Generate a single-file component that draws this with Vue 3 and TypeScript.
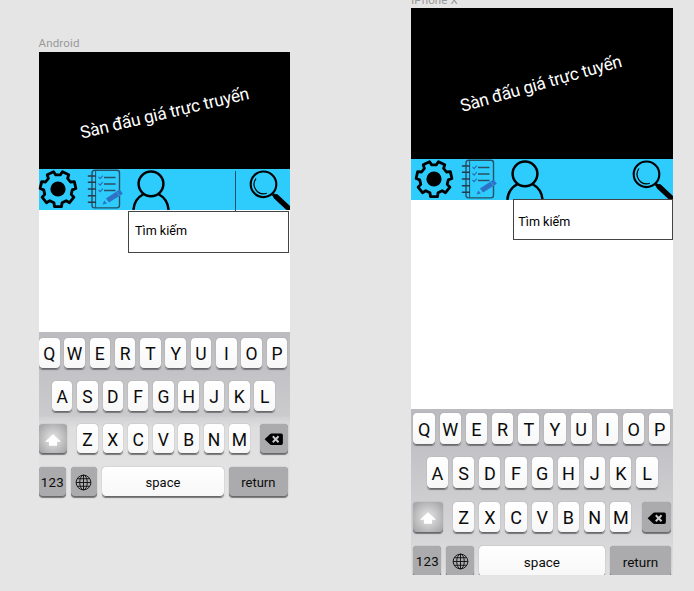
<script setup lang="ts">
interface Device {
  id: string
  label: string
  title: string
  width: number
  height: number
  x: number
  y: number
  angle: number
  length: number
}

const devices: Device[] = [
  { id: 'android', label: 'Android', title: 'Sàn đấu giá trực truyến', width: 251.5, height: 117, x: 127, y: 66.6, angle: -13.3, length: 173 },
  { id: 'iphone', label: 'iPhone X', title: 'Sàn đấu giá trực tuyến', width: 262, height: 151, x: 131.6, y: 81.3, angle: -15.9, length: 167 },
]

const topKeys = 'QWERTYUIOP'.split('')
const homeKeys = 'ASDFGHJKL'.split('')
const bottomKeys = 'ZXCVBNM'.split('')

function gearPath(teeth: number, outer: number, inner: number): string {
  const step = (Math.PI * 2) / teeth
  const profile: [number, number][] = [
    [-0.32, inner],
    [-0.22, outer],
    [0.22, outer],
    [0.32, inner],
  ]
  const points: string[] = []
  for (let i = 0; i < teeth; i++) {
    for (const [offset, radius] of profile) {
      const a = Math.PI / 2 + (i + offset) * step
      points.push(`${(20 + Math.cos(a) * radius).toFixed(2)} ${(20 + Math.sin(a) * radius).toFixed(2)}`)
    }
  }
  return `M${points.join('L')}Z`
}

const gear = gearPath(7, 17.9, 14.3)
</script>

<template>
  <main class="board">
    <section v-for="d in devices" :key="d.id" class="device" :class="d.id">
      <div class="label">{{ d.label }}</div>
      <div class="screen">
        <svg class="banner" :viewBox="`0 0 ${d.width} ${d.height}`" preserveAspectRatio="none">
          <text :x="d.x" :y="d.y" :transform="`rotate(${d.angle} ${d.x} ${d.y})`" :textLength="d.length" text-anchor="middle">{{ d.title }}</text>
        </svg>
        <div class="toolbar">
          <svg class="icon gear" viewBox="0 0 40 40">
            <path :d="gear" fill="none" stroke="#000" stroke-width="2.8" stroke-linejoin="round" />
            <circle cx="20" cy="20" r="7.6" />
          </svg>
          <svg class="icon notes" viewBox="0 0 38 41" fill="none">
            <rect x="6" y="1.3" width="27.5" height="37.6" rx="2.6" stroke="#285067" stroke-width="1.4" />
            <path d="M9.6 1.5V38.7" stroke="#285067" stroke-width="1" />
            <path d="M2.4 7h7M2.4 13.3h7M2.4 20h7M2.4 26.7h7M2.4 33.3h7" stroke="#243d4e" stroke-width="1.5" stroke-linecap="round" />
            <path d="M18 8.5h11.5M18 15h11.5M18 21.5h11.5" stroke="#285067" stroke-width="1.4" />
            <path d="M12.5 8l1.7 1.7 2.6-3M12.5 14.5l1.7 1.7 2.6-3M12.5 21l1.7 1.7 2.6-3" stroke="#2871b7" stroke-width="1.2" />
            <path d="M19.9 29.4L33.6 20.6 36.8 24.8 23 33.6Z" fill="#2d72c5" />
            <path d="M30.4 22.4L33.8 27.2" stroke="#31a7e6" stroke-width=".8" />
            <path d="M18.2 31.4L21 34.6 16.6 35.6Z" fill="#2d72c5" />
          </svg>
          <svg class="icon person" viewBox="0 0 38 41" fill="none" stroke="#000" stroke-width="2.5">
            <circle cx="19" cy="14.8" r="12.4" />
            <path d="M1.4 40.8C2 33 6 28 11.7 25M26.3 25C32 28 36 33 36.6 40.8" />
          </svg>
          <span class="divider"></span>
          <svg class="icon search" viewBox="0 0 41 41" fill="none" stroke="#000">
            <circle cx="14.5" cy="15.3" r="12.8" stroke-width="2.1" />
            <path d="M7 9.5A9.6 9.6 0 0 0 17.8 24.3" stroke-width="1.2" />
            <path d="M23.8 25.2L27 28.2" stroke-width="3" />
            <path d="M27.2 27.8L39.5 39.2" stroke-width="5.4" stroke-linecap="round" />
          </svg>
          <div class="field">Tìm kiếm</div>
        </div>
        <div class="content"></div>
        <div class="keyboard">
          <div class="row">
            <span v-for="k in topKeys" :key="k" class="key">{{ k }}</span>
          </div>
          <div class="row centered">
            <span v-for="k in homeKeys" :key="k" class="key">{{ k }}</span>
          </div>
          <div class="row spread">
            <span class="key shift">
              <svg viewBox="0 0 20 16"><path d="M10 1.5L19 10H14.5V14.5H5.5V10H1Z" fill="#fff" /></svg>
            </span>
            <div class="group">
              <span v-for="k in bottomKeys" :key="k" class="key">{{ k }}</span>
            </div>
            <span class="key dark erase">
              <svg viewBox="0 0 20 13">
                <path d="M0.5 6.5L6 1.3Q6.7 .6 7.7 .6H17.8Q19.5 .6 19.5 2.3V10.7Q19.5 12.4 17.8 12.4H7.7Q6.7 12.4 6 11.7Z" />
                <path d="M9 3.4L15 9.6M15 3.4L9 9.6" stroke="#c9c9c9" stroke-width="2" />
              </svg>
            </span>
          </div>
          <div class="row">
            <span class="key dark digits">123</span>
            <span class="key dark globe">
              <svg viewBox="0 0 18 18" fill="none" stroke="#111" stroke-width="1">
                <circle cx="9" cy="9" r="7.8" />
                <ellipse cx="9" cy="9" rx="4" ry="7.8" />
                <path d="M9 1.2V16.8M1.2 9H16.8M2.4 5H15.6M2.4 13H15.6" />
              </svg>
            </span>
            <span class="key space">space</span>
            <span class="key dark return">return</span>
          </div>
        </div>
      </div>
    </section>
  </main>
</template>

<style>
body {
  background: #e5e5e5;
}
</style>

<style scoped>
.board {
  display: flex;
  align-items: flex-start;
  width: 694px;
  height: 591px;
  padding-left: 38.5px;
  box-sizing: border-box;
  overflow: hidden;
  background: #e5e5e5;
  font-family: Roboto, 'Noto Sans', sans-serif;
}
.device {
  flex: none;
}
.android {
  width: 251.5px;
  padding-top: 37px;
  margin-right: 121.3px;
  --key: 20.5px;
  --gap: 4.8px;
  --wide: 28.3px;
  --row-gap: 12.3px;
  --key-height: 30.5px;
}
.iphone {
  width: 262px;
  --key: 21.2px;
  --gap: 5px;
  --wide: 29.3px;
  --row-gap: 12.7px;
  --key-height: 31.5px;
}
.label {
  height: 14.5px;
  font-size: 11.5px;
  line-height: 13px;
  letter-spacing: 0.15px;
  color: #999;
}
.iphone .label {
  height: 14.3px;
  margin-top: -6px;
}
.screen {
  display: flex;
  flex-direction: column;
  background: #fff;
}
.banner {
  display: block;
  width: 100%;
  height: 117.2px;
  background: #000;
}
.iphone .banner {
  height: 150.7px;
}
.banner text {
  fill: #fff;
  font-size: 17.3px;
}
.toolbar {
  position: relative;
  display: flex;
  height: 41.3px;
  background: #2dccfd;
}
.icon {
  flex: none;
  display: block;
}
.gear {
  width: 40px;
  height: 40px;
  margin-left: -1px;
}
.iphone .gear {
  margin-left: 2.3px;
}
.notes {
  width: 38px;
  height: 41px;
  margin-left: 8px;
}
.iphone .notes {
  margin-left: 6.5px;
}
.person {
  width: 38px;
  height: 41px;
  margin-left: 8.5px;
}
.iphone .person {
  margin-left: 7.8px;
}
.divider {
  width: 1px;
  height: 41px;
  margin: 2px 0 0 65px;
  background: #17506a;
}
.iphone .divider {
  visibility: hidden;
}
.search {
  width: 41px;
  height: 41px;
  margin-left: auto;
  margin-right: 0.4px;
}
.iphone .search {
  margin-right: 0.2px;
}
.field {
  position: absolute;
  top: 42px;
  right: 1.5px;
  width: 160.5px;
  height: 42.5px;
  box-sizing: border-box;
  padding-left: 6px;
  border: 1px solid #444;
  background: #fff;
  color: #000;
  font-size: 12.6px;
  line-height: 37px;
}
.iphone .field {
  top: 40px;
  right: 0;
  height: 41.5px;
  padding-left: 4.5px;
  line-height: 43px;
}
.content {
  height: 122px;
}
.iphone .content {
  height: 209px;
}
.keyboard {
  display: flex;
  flex-direction: column;
  gap: var(--row-gap);
  height: 168px;
  padding: 6.3px 2.2px 0 0.5px;
  box-sizing: border-box;
  overflow: hidden;
  background: linear-gradient(#bcbcc0, #cbcbce 50%, #d2d2d4 51%, #dededf 57%, #e5e5e5);
}
.iphone .keyboard {
  height: 166px;
  padding: 4px 2.3px 0 2.2px;
  background: linear-gradient(#bababf, #cccccf 50%, #dfdfe0);
}
.row {
  display: flex;
  flex: none;
  gap: var(--gap);
}
.centered {
  justify-content: center;
}
.spread {
  justify-content: space-between;
}
.group {
  display: flex;
  gap: var(--gap);
}
.key {
  display: flex;
  flex: none;
  align-items: center;
  justify-content: center;
  width: var(--key);
  height: var(--key-height);
  box-sizing: border-box;
  padding-top: 1px;
  border-radius: 4px;
  background: linear-gradient(#fff, #f7f7f8);
  box-shadow: inset 0 -1px 0 #68686b, 0 0.5px 1px #77777b;
  color: #0b0b0b;
  font-size: 17.5px;
}
.iphone .key {
  font-size: 18px;
}
.key.dark {
  background: #ababad;
}
.key.shift {
  width: var(--wide);
  background: radial-gradient(ellipse, #dcdcdd 15%, #a9a9ab 85%);
}
.shift svg {
  width: 18px;
  height: 16px;
}
.key.erase {
  width: var(--wide);
}
.erase svg {
  width: 19.5px;
  height: 12.5px;
}
.android .key.digits,
.iphone .key.digits {
  width: calc(var(--wide) - 1.5px);
  font-size: 13.3px;
  letter-spacing: 0.3px;
}
.key.globe {
  width: calc(var(--wide) - 1.8px);
}
.globe svg {
  width: 17px;
  height: 17px;
}
.android .key.space,
.iphone .key.space {
  flex: 1;
  font-size: 13px;
}
.android .key.return,
.iphone .key.return {
  width: 59px;
  font-size: 13px;
}
.iphone .key.space,
.iphone .key.return {
  font-size: 13.5px;
}
.iphone .key.return {
  width: 61px;
}
.iphone .key.digits,
.iphone .key.globe,
.iphone .key.space,
.iphone .key.return {
  padding-top: 0;
}
</style>
